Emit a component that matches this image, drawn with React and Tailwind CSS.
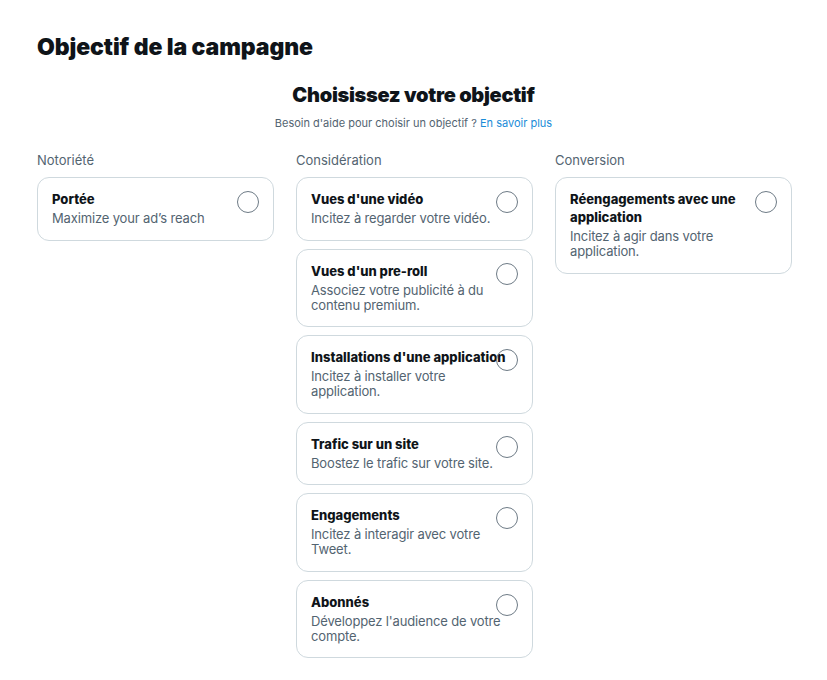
const columns = [
  {
    label: 'Notoriété',
    items: [{ title: 'Portée', desc: 'Maximize your ad’s reach' }],
  },
  {
    label: 'Considération',
    items: [
      { title: "Vues d'une vidéo", desc: 'Incitez à regarder votre vidéo.' },
      { title: "Vues d'un pre-roll", desc: 'Associez votre publicité à du contenu premium.' },
      { title: "Installations d'une application", desc: 'Incitez à installer votre application.' },
      { title: 'Trafic sur un site', desc: 'Boostez le trafic sur votre site.' },
      { title: 'Engagements', desc: 'Incitez à interagir avec votre Tweet.' },
      { title: 'Abonnés', desc: "Développez l'audience de votre compte." },
    ],
  },
  {
    label: 'Conversion',
    items: [{ title: 'Réengagements avec une application', desc: 'Incitez à agir dans votre application.' }],
  },
];

const ObjectiveCard = ({ title, desc }) => (
  <label className="relative block cursor-pointer rounded-xl border border-[#cfd9de] bg-white px-[14px] pt-[12px] pb-[13.5px]">
    <div className="text-[13px] font-extrabold leading-[18px] text-[#0f1419]">{title}</div>
    <div className="mt-[3px] text-[13px] leading-[15px] tracking-[-0.15px] text-[#536471]">{desc}</div>
    <span className="absolute right-[14px] top-[13px] h-[22px] w-[22px] rounded-full border-[1.5px] border-[#6e7b86]" />
  </label>
);

export default function App() {
  return (
    <div className="min-h-screen bg-white px-[37px] pt-[31px] font-['Inter',sans-serif] text-[#0f1419]">
      <h1 className="text-[23px] font-black leading-[32px] tracking-[-0.1px]">Objectif de la campagne</h1>

      <div className="mt-[17px] text-center">
        <h2 className="text-[20px] font-black leading-[30px] tracking-[-0.3px]">Choisissez votre objectif</h2>
        <p className="mt-[6px] text-[11px] leading-[14px] text-[#536471]">
          Besoin d'aide pour choisir un objectif ? <a href="#" className="text-[#1a8cd8]">En savoir plus</a>
        </p>
      </div>

      <div className="mt-[22px] grid w-[755px] grid-cols-3 gap-x-[22px]">
        {columns.map((col) => (
          <div key={col.label}>
            <div className="text-[13px] leading-[16px] text-[#536471]">{col.label}</div>
            <div className="mt-[9px] flex flex-col gap-2">
              {col.items.map((item) => (
                <ObjectiveCard key={item.title} {...item} />
              ))}
            </div>
          </div>
        ))}
      </div>
    </div>
  );
}
